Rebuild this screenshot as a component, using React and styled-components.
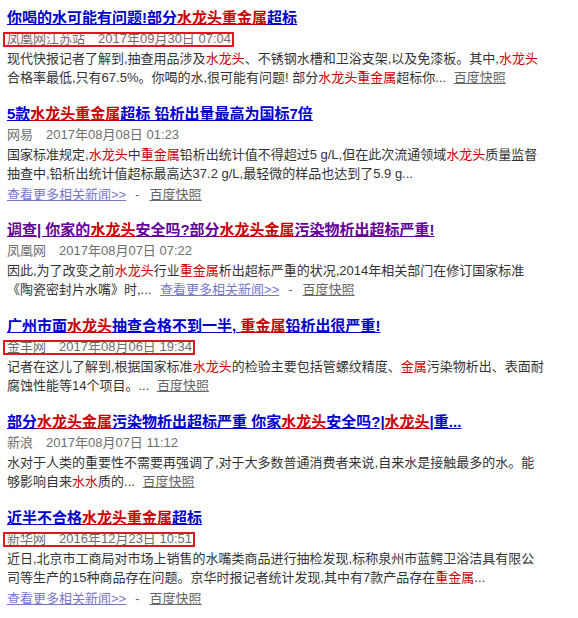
import styled, { createGlobalStyle } from 'styled-components';

const GlobalStyle = createGlobalStyle`
  body {
    margin: 0;
    background: #fff;
    font-family: 'Liberation Sans', Arial, 'Noto Sans CJK SC', sans-serif;
  }
`;

const Page = styled.div`
  width: 560px;
  padding: 7px 0 0 7px;
`;

const Result = styled.div`
  margin-bottom: 16px;
`;

const Title = styled.a`
  display: block;
  font-size: 15px;
  line-height: 22px;
  font-weight: bold;
  white-space: nowrap;
  color: ${(p) => (p.$visited ? '#660099' : '#0000cc')};
  text-decoration: underline;
`;

const Hl = styled.em`
  font-style: normal;
  color: #cc0000;
  text-decoration: underline;
`;

const Meta = styled.div`
  font-size: 13px;
  line-height: 20px;
  color: #6e6e6e;
`;

const MetaText = styled.span`
  position: relative;
  display: inline-block;

  &::after {
    content: '';
    display: ${(p) => (p.$boxed ? 'block' : 'none')};
    position: absolute;
    left: -4px;
    right: -3px;
    top: 3px;
    bottom: 2px;
    border: 2px solid #e3161d;
  }
`;

const Source = styled.span`
  margin-right: 13px;
`;

const Summary = styled.div`
  font-size: 13px;
  line-height: 19px;
  color: #333;
`;

const Line = styled.div`
  white-space: nowrap;
`;

const Kw = styled.em`
  font-style: normal;
  color: #cc0000;
`;

const Links = styled.div`
  margin-top: 3px;
  font-size: 13px;
  line-height: 17px;
`;

const Related = styled.a`
  color: #7777cc;
  text-decoration: underline;
  margin-left: ${(p) => (p.$inline ? '5px' : '0')};
`;

const Sep = styled.span`
  color: #666;
  margin: 0 10px 0 9px;
`;

const Snapshot = styled.a`
  color: #666;
  text-decoration: underline;
  margin-left: ${(p) => (p.$inline ? '4px' : '0')};
`;

// split on ** markers: odd parts are highlighted keywords
const mark = (str, Tag) =>
  str.split('**').map((s, i) => (i % 2 ? <Tag key={i}>{s}</Tag> : s));

const results = [
  {
    title: '你喝的水可能有问题!部分**水龙头重金属**超标',
    source: '凤凰网江苏站',
    date: '2017年09月30日 07:04',
    boxed: true,
    lines: [
      '现代快报记者了解到,抽查用品涉及**水龙头**、不锈钢水槽和卫浴支架,以及免漆板。其中,**水龙头**',
      '合格率最低,只有67.5%。你喝的水,很可能有问题! 部分**水龙头重金属**超标你...',
    ],
    inline: true,
  },
  {
    title: '5款**水龙头重金属**超标 铅析出量最高为国标7倍',
    source: '网易',
    date: '2017年08月08日 01:23',
    lines: [
      '国家标准规定,**水龙头**中**重金属**铅析出统计值不得超过5 g/L,但在此次流通领域**水龙头**质量监督',
      '抽查中,铅析出统计值超标最高达37.2 g/L,最轻微的样品也达到了5.9 g...',
    ],
    related: true,
  },
  {
    title: '调查| 你家的**水龙头**安全吗?部分**水龙头金属**污染物析出超标严重!',
    visited: true,
    source: '凤凰网',
    date: '2017年08月07日 07:22',
    lines: [
      '因此,为了改变之前**水龙头**行业**重金属**析出超标严重的状况,2014年相关部门在修订国家标准',
      '《陶瓷密封片水嘴》时,...',
    ],
    inline: true,
    related: true,
  },
  {
    title: '广州市面**水龙头**抽查合格不到一半, **重金属**铅析出很严重!',
    source: '金羊网',
    date: '2017年08月06日 19:34',
    boxed: true,
    lines: [
      '记者在这儿了解到,根据国家标准**水龙头**的检验主要包括管螺纹精度、**金属**污染物析出、表面耐',
      '腐蚀性能等14个项目。...',
    ],
    inline: true,
  },
  {
    title: '部分**水龙头金属**污染物析出超标严重 你家**水龙头**安全吗?|**水龙头**|重...',
    source: '新浪',
    date: '2017年08月07日 11:12',
    lines: [
      '水对于人类的重要性不需要再强调了,对于大多数普通消费者来说,自来水是接触最多的水。能',
      '够影响自来**水水**质的...',
    ],
    inline: true,
  },
  {
    title: '近半不合格**水龙头重金属**超标',
    source: '新华网',
    date: '2016年12月23日 10:51',
    boxed: true,
    lines: [
      '近日,北京市工商局对市场上销售的水嘴类商品进行抽检发现,标称泉州市蓝鳄卫浴洁具有限公',
      '司等生产的15种商品存在问题。京华时报记者统计发现,其中有7款产品存在**重金属**...',
    ],
    related: true,
  },
];

function ResultItem({ item }) {
  const links = (inline) => (
    <>
      {item.related && (
        <>
          <Related href="#" $inline={inline}>查看更多相关新闻&gt;&gt;</Related>
          <Sep>-</Sep>
        </>
      )}
      <Snapshot href="#" $inline={inline && !item.related}>百度快照</Snapshot>
    </>
  );

  const last = item.lines.length - 1;

  return (
    <Result>
      <Title href="#" $visited={item.visited}>{mark(item.title, Hl)}</Title>
      <Meta>
        <MetaText $boxed={item.boxed}>
          <Source>{item.source}</Source>
          {item.date}
        </MetaText>
      </Meta>
      <Summary>
        {item.lines.map((line, i) => (
          <Line key={i}>
            {mark(line, Kw)}
            {item.inline && i === last && <> {links(true)}</>}
          </Line>
        ))}
      </Summary>
      {!item.inline && <Links>{links(false)}</Links>}
    </Result>
  );
}

export default function App() {
  return (
    <>
      <GlobalStyle />
      <Page>
        {results.map((item, i) => (
          <ResultItem key={i} item={item} />
        ))}
      </Page>
    </>
  );
}
